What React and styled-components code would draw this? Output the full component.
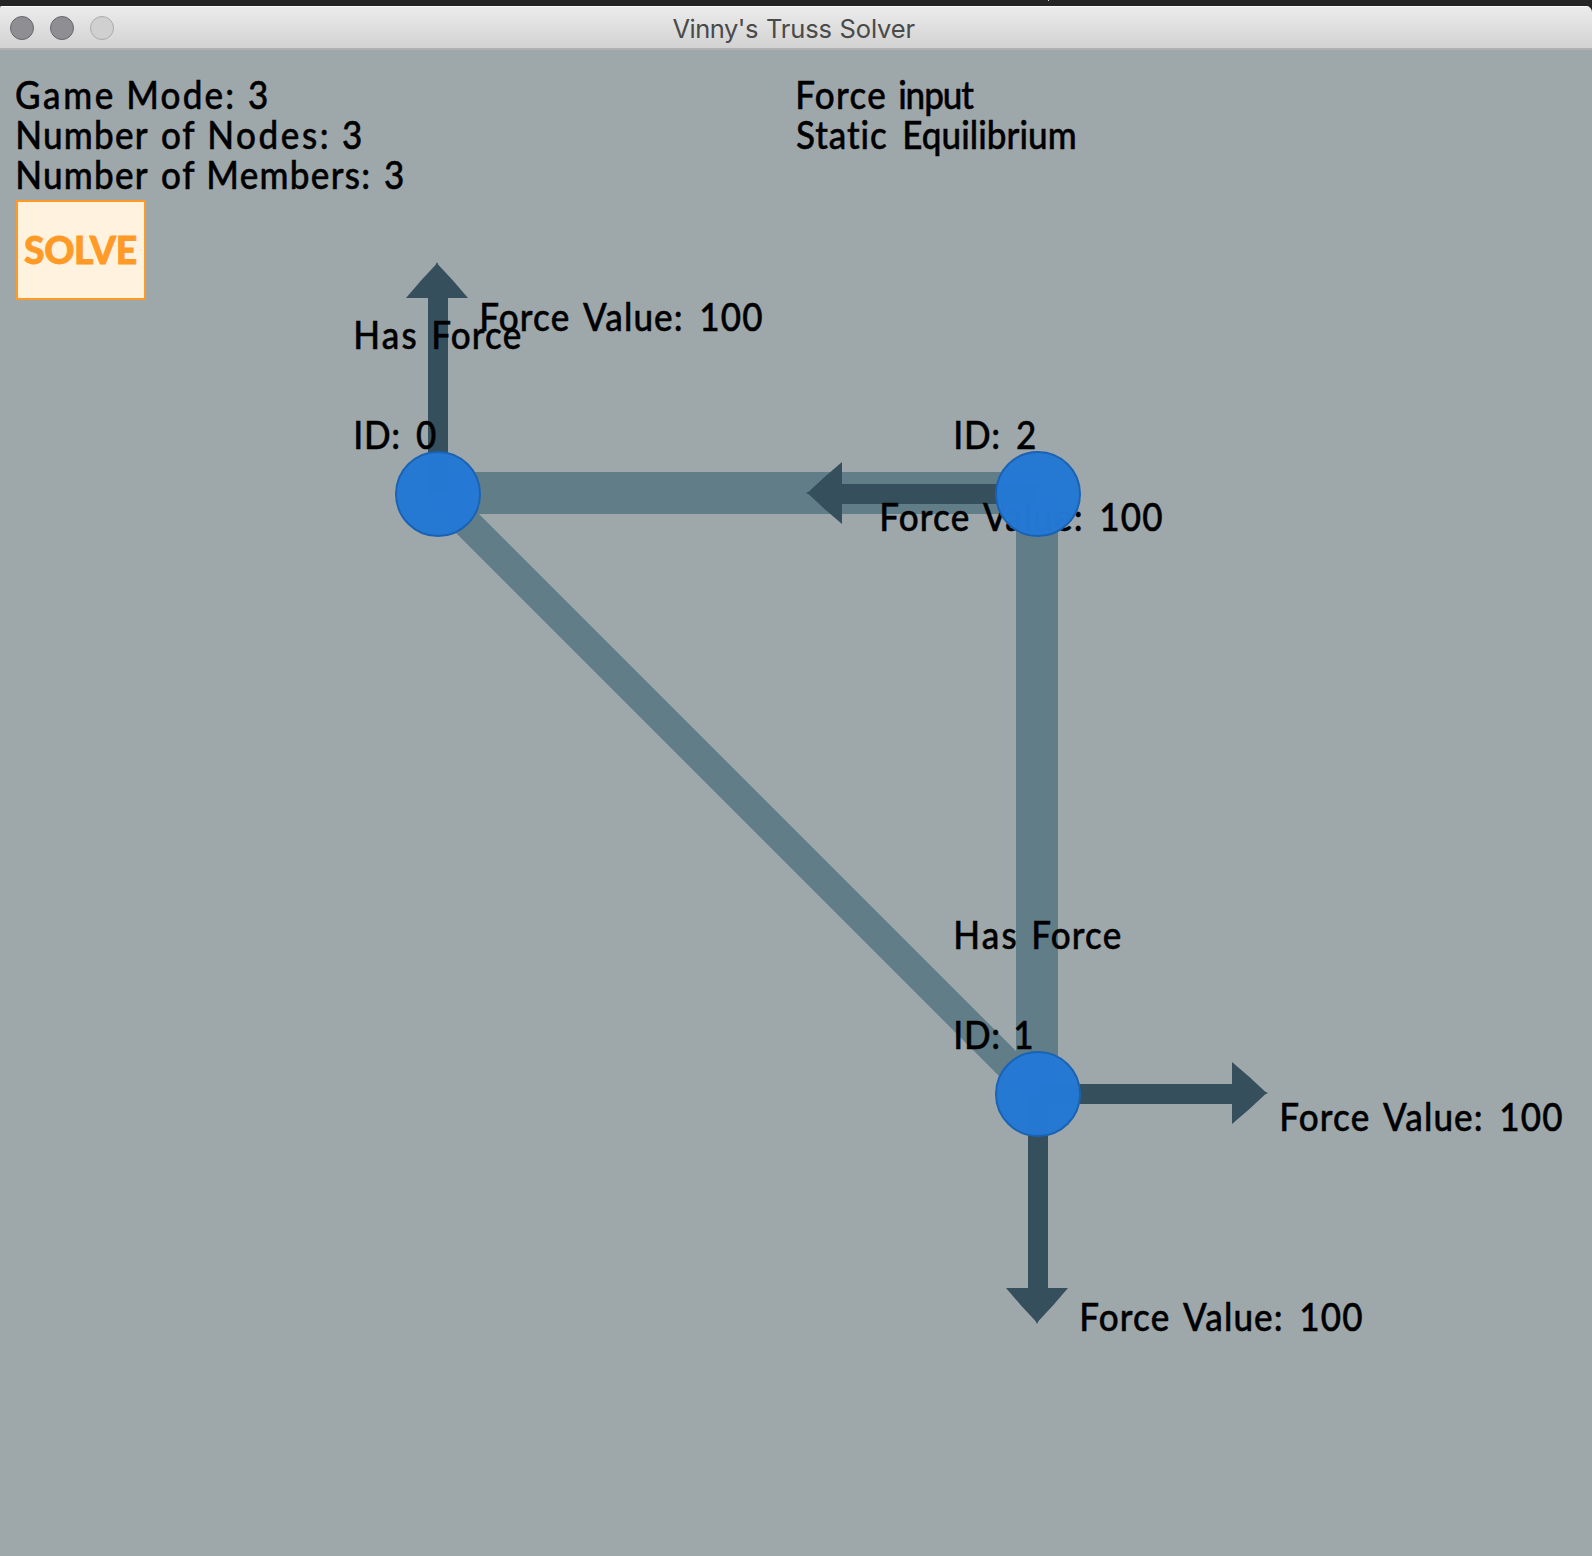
import React, { useLayoutEffect, useState } from "react";
import styled, { createGlobalStyle } from "styled-components";

const GlobalStyle = createGlobalStyle`
  html, body { margin: 0; padding: 0; background: #252525; }
  *, *::before, *::after { box-sizing: border-box; }
`;

const FACES = {
  label: { family: '"Lato", sans-serif', size: 38.5, weight: 500, squeeze: 0.91, stroke: 0.5, lift: 0.2 },
  button: { family: '"Lato", sans-serif', size: 38.5, weight: 900, squeeze: 0.97, stroke: 0.8, lift: 0 },
  title: { family: '"Inter", sans-serif', size: 25.5, weight: 400, squeeze: 1, stroke: 0 },
};

const Screen = styled.div`
  display: flex;
  flex-direction: column;
  width: 1592px;
  height: 1556px;
  overflow: hidden;
  background: #252525;
`;

const DesktopStrip = styled.div`
  flex: none;
  height: 6px;
  padding-left: 1048px;
  &::before {
    content: "";
    display: block;
    width: 1px;
    height: 1px;
    background: #d8d8d8;
  }
`;

const Window = styled.main`
  flex: 1;
  display: flex;
  flex-direction: column;
  border-radius: 2px 6px 0 0;
  overflow: hidden;
`;

const TitleBar = styled.header`
  flex: none;
  display: flex;
  align-items: center;
  height: 44px;
  padding: 3px 10px 0;
  background: linear-gradient(#ececec, #d2d2d2);
  border-bottom: 2px solid #b1b1b2;
  box-shadow: inset 0 1px 0 #fafafa;
`;

const Lights = styled.div`
  display: flex;
  gap: 16px;
  width: 663px;
  padding-bottom: 1px;
`;

const Light = styled.span`
  width: 24px;
  height: 24px;
  border-radius: 50%;
  border: 1px solid ${(p) => (p.$off ? "#ababab" : "#69686d")};
  background: ${(p) => (p.$off ? "#d0d0d0" : "#8f8e93")};
`;

const Stage = styled.section`
  flex: 1;
  position: relative;
  background: #9ea7aa;
`;

const Hud = styled.div`
  display: flex;
  align-items: flex-start;
  padding: 24px 16px 0;
`;

const HudColumn = styled.div`
  display: flex;
  flex-direction: column;
  width: ${(p) => p.$width};
`;

const Line = styled.div`
  display: flex;
  flex: none;
  height: 40px;
  line-height: 40px;
  color: ${(p) => p.$color || "#000"};
  white-space: pre;
`;

const WordBox = styled.span`
  flex: none;
  display: block;
  font-family: ${(p) => FACES[p.$face].family};
  font-size: ${(p) => FACES[p.$face].size}px;
  font-weight: ${(p) => FACES[p.$face].weight};
  -webkit-text-stroke: ${(p) => FACES[p.$face].stroke}px currentColor;
  transform: ${(p) =>
    FACES[p.$face].squeeze === 1
      ? "none"
      : `translateY(-${FACES[p.$face].lift}px) scaleX(${FACES[p.$face].squeeze})`};
  transform-origin: left center;
`;

const SolveButton = styled.button`
  display: flex;
  align-items: center;
  width: 130px;
  height: 100px;
  margin-top: 6px;
  padding: 0 6px 2px;
  border: 2px solid #ff9a27;
  border-radius: 0;
  background: #fff3e0;
`;

const Layer = styled.svg`
  position: absolute;
  left: 0;
  top: 0;
  pointer-events: none;
`;

const Pin = styled.div`
  position: absolute;
  left: ${(p) => p.$x}px;
  top: ${(p) => p.$y - 84}px;
`;

/* Spreads the letters of one word so its ink spans exactly `width` pixels. */
function Word({ face, text, width, gap, last }) {
  const [fit, setFit] = useState({ spacing: 0, indent: 0 });
  useLayoutEffect(() => {
    const ctx = document.createElement("canvas").getContext("2d");
    const f = FACES[face];
    ctx.font = `${f.weight} ${f.size}px ${f.family}`;
    const m = ctx.measureText(text);
    const ink = m.actualBoundingBoxLeft + m.actualBoundingBoxRight;
    setFit({
      spacing: text.length > 1 ? (width / f.squeeze - ink) / (text.length - 1) : 0,
      indent: m.actualBoundingBoxLeft,
    });
  }, [face, text, width]);
  return (
    <WordBox
      $face={face}
      style={{ width, marginLeft: gap, letterSpacing: fit.spacing, textIndent: fit.indent }}
    >
      {last ? text : text + " "}
    </WordBox>
  );
}

/* words: [text, start, end] with offsets from the line's left edge */
function Text({ words, face = "label", color }) {
  return (
    <Line $color={color}>
      {words.map(([text, start, end], i) => (
        <Word
          key={i}
          face={face}
          text={text}
          width={end - start}
          gap={start - (i ? words[i - 1][2] : 0)}
          last={i === words.length - 1}
        />
      ))}
    </Line>
  );
}

const FORCE_VALUE = [["Force", 0.5, 86.5], ["Value:", 101, 199], ["100", 220, 280.3]];
const HAS_FORCE = [["Has", 0.5, 60.5], ["Force", 78.5, 164.5]];
const idLabel = (n, start, end) => [["ID:", 0.5, 43], [n, start, end]];

const LABELS = [
  { x: 481.5, y: 330, words: FORCE_VALUE },
  { x: 355.3, y: 348, words: HAS_FORCE },
  { x: 355.3, y: 448, words: idLabel("0", 61.5, 81.5) },
  { x: 955.3, y: 448, words: idLabel("2", 61.3, 79.5) },
  { x: 881.5, y: 530, words: FORCE_VALUE },
  { x: 955.3, y: 948, words: HAS_FORCE },
  { x: 955.3, y: 1048, words: idLabel("1", 61, 74) },
  { x: 1281.5, y: 1130, words: FORCE_VALUE },
  { x: 1081.5, y: 1330, words: FORCE_VALUE },
];

const NODES = [[438, 494], [1038, 494], [1038, 1094]];
const HEAD = "195,-31 213,-15.5 228,-1.5 231,0 228,1.5 213,15.5 195,31";

const ARROWS = [
  { shaft: [428, 297, 20, 197], at: [437, 493], turn: -90 },
  { shaft: [841, 484, 197, 20], at: [1037, 493], turn: 180 },
  { shaft: [1038, 1084, 195, 20], at: [1037, 1093], turn: 0 },
  { shaft: [1028, 1094, 20, 195], at: [1037, 1093], turn: 90 },
];

export default function App() {
  return (
    <Screen>
      <GlobalStyle />
      <DesktopStrip />
      <Window>
        <TitleBar>
          <Lights>
            <Light />
            <Light />
            <Light $off />
          </Lights>
          <Text
            face="title"
            color="#4a4a4a"
            words={[["Vinny's", -0.5, 85], ["Truss", 94, 158.5], ["Solver", 167.5, 242.5]]}
          />
        </TitleBar>
        <Stage>
          <Layer width="1592" height="1506" viewBox="0 50 1592 1506">
            <g fill="#617d88">
              <rect x="438" y="472" width="600" height="42" />
              <rect x="1016" y="494" width="42" height="600" />
              <polygon points="417,494 459,494 1059,1094 1017,1094" />
            </g>
            <g fill="#35505c">
              {ARROWS.map(({ shaft, at, turn }, i) => (
                <g key={i}>
                  <rect x={shaft[0]} y={shaft[1]} width={shaft[2]} height={shaft[3]} />
                  <polygon points={HEAD} transform={`translate(${at[0]} ${at[1]}) rotate(${turn})`} />
                </g>
              ))}
            </g>
          </Layer>
          {LABELS.map((l, i) => (
            <Pin key={i} $x={l.x} $y={l.y}>
              <Text words={l.words} />
            </Pin>
          ))}
          <Layer width="1592" height="1506" viewBox="0 50 1592 1506">
            {NODES.map(([x, y]) => (
              <circle
                key={`${x}-${y}`}
                cx={x}
                cy={y}
                r="42"
                fill="#2478d3"
                fillOpacity="0.99"
                stroke="#1a63b4"
                strokeWidth="2"
              />
            ))}
          </Layer>
          <Hud>
            <HudColumn $width="780px">
              <Text words={[["Game", 0, 96], ["Mode:", 113, 216.5], ["3", 233, 251]]} />
              <Text words={[["Number", 1.5, 131], ["of", 145.5, 178.5], ["Nodes:", 193.5, 310.5], ["3", 327, 345]]} />
              <Text words={[["Number", 1.5, 131], ["of", 145.5, 178.5], ["Members:", 192.5, 352], ["3", 369, 387]]} />
              <SolveButton>
                <Text face="button" color="#ff9a27" words={[["SOLVE", 0, 112]]} />
              </SolveButton>
            </HudColumn>
            <HudColumn $width="300px">
              <Text words={[["Force", 1.5, 88], ["input", 104, 178]]} />
              <Text words={[["Static", 0.5, 90.5], ["Equilibrium", 108.5, 278.5]]} />
            </HudColumn>
          </Hud>
        </Stage>
      </Window>
    </Screen>
  );
}
